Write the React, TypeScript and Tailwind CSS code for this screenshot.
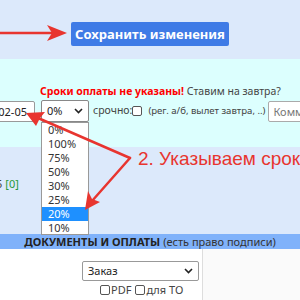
import React from 'react'

const OPTIONS = ['0%', '100%', '75%', '50%', '30%', '25%', '20%', '10%']

function Chevron({ className }: { className?: string }) {
  return (
    <svg width="9" height="6" viewBox="0 0 9 6" className={className}>
      <polyline points="1,1 4.5,4.5 8,1" fill="none" stroke="#222" strokeWidth="1.6" />
    </svg>
  )
}

function Box() {
  return <span className="inline-block shrink-0 w-[10px] h-[10px] border border-[#555] rounded-[2px] bg-white mr-[1px]" />
}

// Red annotation arrows drawn over the page
function Arrows() {
  return (
    <svg width="300" height="300" viewBox="0 0 300 300" className="absolute left-0 top-0 pointer-events-none">
      <g stroke="#e8352f" strokeWidth="2.5" fill="none" strokeLinecap="round">
        <line x1="-2" y1="33" x2="52" y2="33" />
        <line x1="130" y1="158" x2="38" y2="118" />
        <line x1="130" y1="158" x2="92" y2="201" />
      </g>
      <g fill="#e8352f">
        <polygon points="67,33 47,25 52,33 47,41" />
        <polygon points="26,113 45,112 40,118 36,126" />
        <polygon points="85,210 88,191 92,199 100,202" />
      </g>
    </svg>
  )
}

export default function App() {
  return (
    <div className="relative w-[300px] h-[300px] overflow-hidden bg-white font-['Noto_Sans',sans-serif] text-[#333]">
      {/* Save bar */}
      <div className="h-[59px] bg-[#dce9fb] pl-[71px] pt-[21px]">
        <button className="h-[24px] w-[158px] rounded-[2px] bg-[#3f7be6] text-white font-bold text-[13px] leading-[24px]">
          Сохранить изменения
        </button>
      </div>

      {/* Payment terms */}
      <div className="h-[88px] bg-[#dcfffe] pt-[25px]">
        <div className="pl-[40px] text-[10.5px] leading-[14px] whitespace-nowrap">
          <span className="text-[#ff0000] font-bold">Сроки оплаты не указаны!</span>{' '}
          <span className="text-[#444]">Ставим на завтра?</span>
        </div>
        <div className="mt-[2px] flex items-center -ml-[50px] whitespace-nowrap text-[10.5px]">
          <div className="shrink-0 h-[21px] w-[85px] border border-[#999] rounded-[2px] bg-white leading-[19px] text-[#222] text-[11px] text-right pr-[7px]">
            2025-02-05
          </div>
          <div className="shrink-0 ml-[6px] h-[22px] w-[48px] border border-[#888] rounded-[2px] bg-white flex items-center justify-between pl-[5px] pr-[5px] text-[11px] text-[#222]">
            0%
            <Chevron />
          </div>
          <div className="shrink-0 ml-[4px] flex items-center text-[#444]">
            срочно:<Box />
          </div>
          <span className="shrink-0 ml-[5px] text-[9.6px] text-[#444]">(рег. а/б, вылет завтра, ..)</span>
          <div className="shrink-0 ml-[3px] h-[21px] w-[70px] border border-[#aaa] rounded-[2px] bg-white pl-[4px] leading-[19px] text-[#777] text-[11px]">
            Комментарий
          </div>
        </div>
      </div>

      {/* Summary band */}
      <div className="h-[87px] bg-[#dce9fb] pt-[29px] flex justify-between whitespace-nowrap text-[11px]">
        <span className="-ml-[20px] text-[#444]">
          1 / 5 <span className="text-[#2a9a3a]">[0]</span>
        </span>
        <span className="text-[#333] -mr-[40px]">Оплата</span>
      </div>

      {/* Documents header */}
      <div className="h-[15px] bg-[#80b2fa] text-center text-[11px] leading-[15px] whitespace-nowrap">
        <span className="font-bold text-[#222]">ДОКУМЕНТЫ И ОПЛАТЫ</span>{' '}
        <span className="text-[#333]">(есть право подписи)</span>
      </div>

      {/* Documents body */}
      <div className="flex h-[51px]">
        <div className="w-[203px] border-r border-[#ddd] bg-white pt-[12px] pl-[82px]">
          <div className="h-[20px] w-[117px] border border-[#999] rounded-[2px] flex items-center justify-between pl-[5px] pr-[5px] text-[11px] text-[#222]">
            Заказ
            <Chevron />
          </div>
          <div className="mt-[2px] pl-[18px] flex items-center gap-[4px] text-[11px] leading-[14px] text-[#444]">
            <span className="flex items-center"><Box />PDF</span>
            <span className="flex items-center"><Box />для ТО</span>
          </div>
        </div>
        <div className="flex-1 bg-[#fafafa]" />
      </div>

      {/* Open dropdown list */}
      <div className="absolute left-[41px] top-[122px] w-[48px] h-[113px] bg-white border border-[#999] text-[11px] text-[#333]">
        {OPTIONS.map((o) => (
          <div
            key={o}
            className={`h-[14px] leading-[14px] pl-[6px] ${o === '20%' ? 'bg-[#1e90ff] text-white' : ''}`}
          >
            {o}
          </div>
        ))}
      </div>

      {/* Annotation text */}
      <div className="absolute left-[138px] top-[147px] whitespace-nowrap font-['Liberation_Sans',sans-serif] text-[19px] leading-[24px] text-[#e8352f]">
        2. Указываем сроки
      </div>

      <Arrows />
    </div>
  )
}
